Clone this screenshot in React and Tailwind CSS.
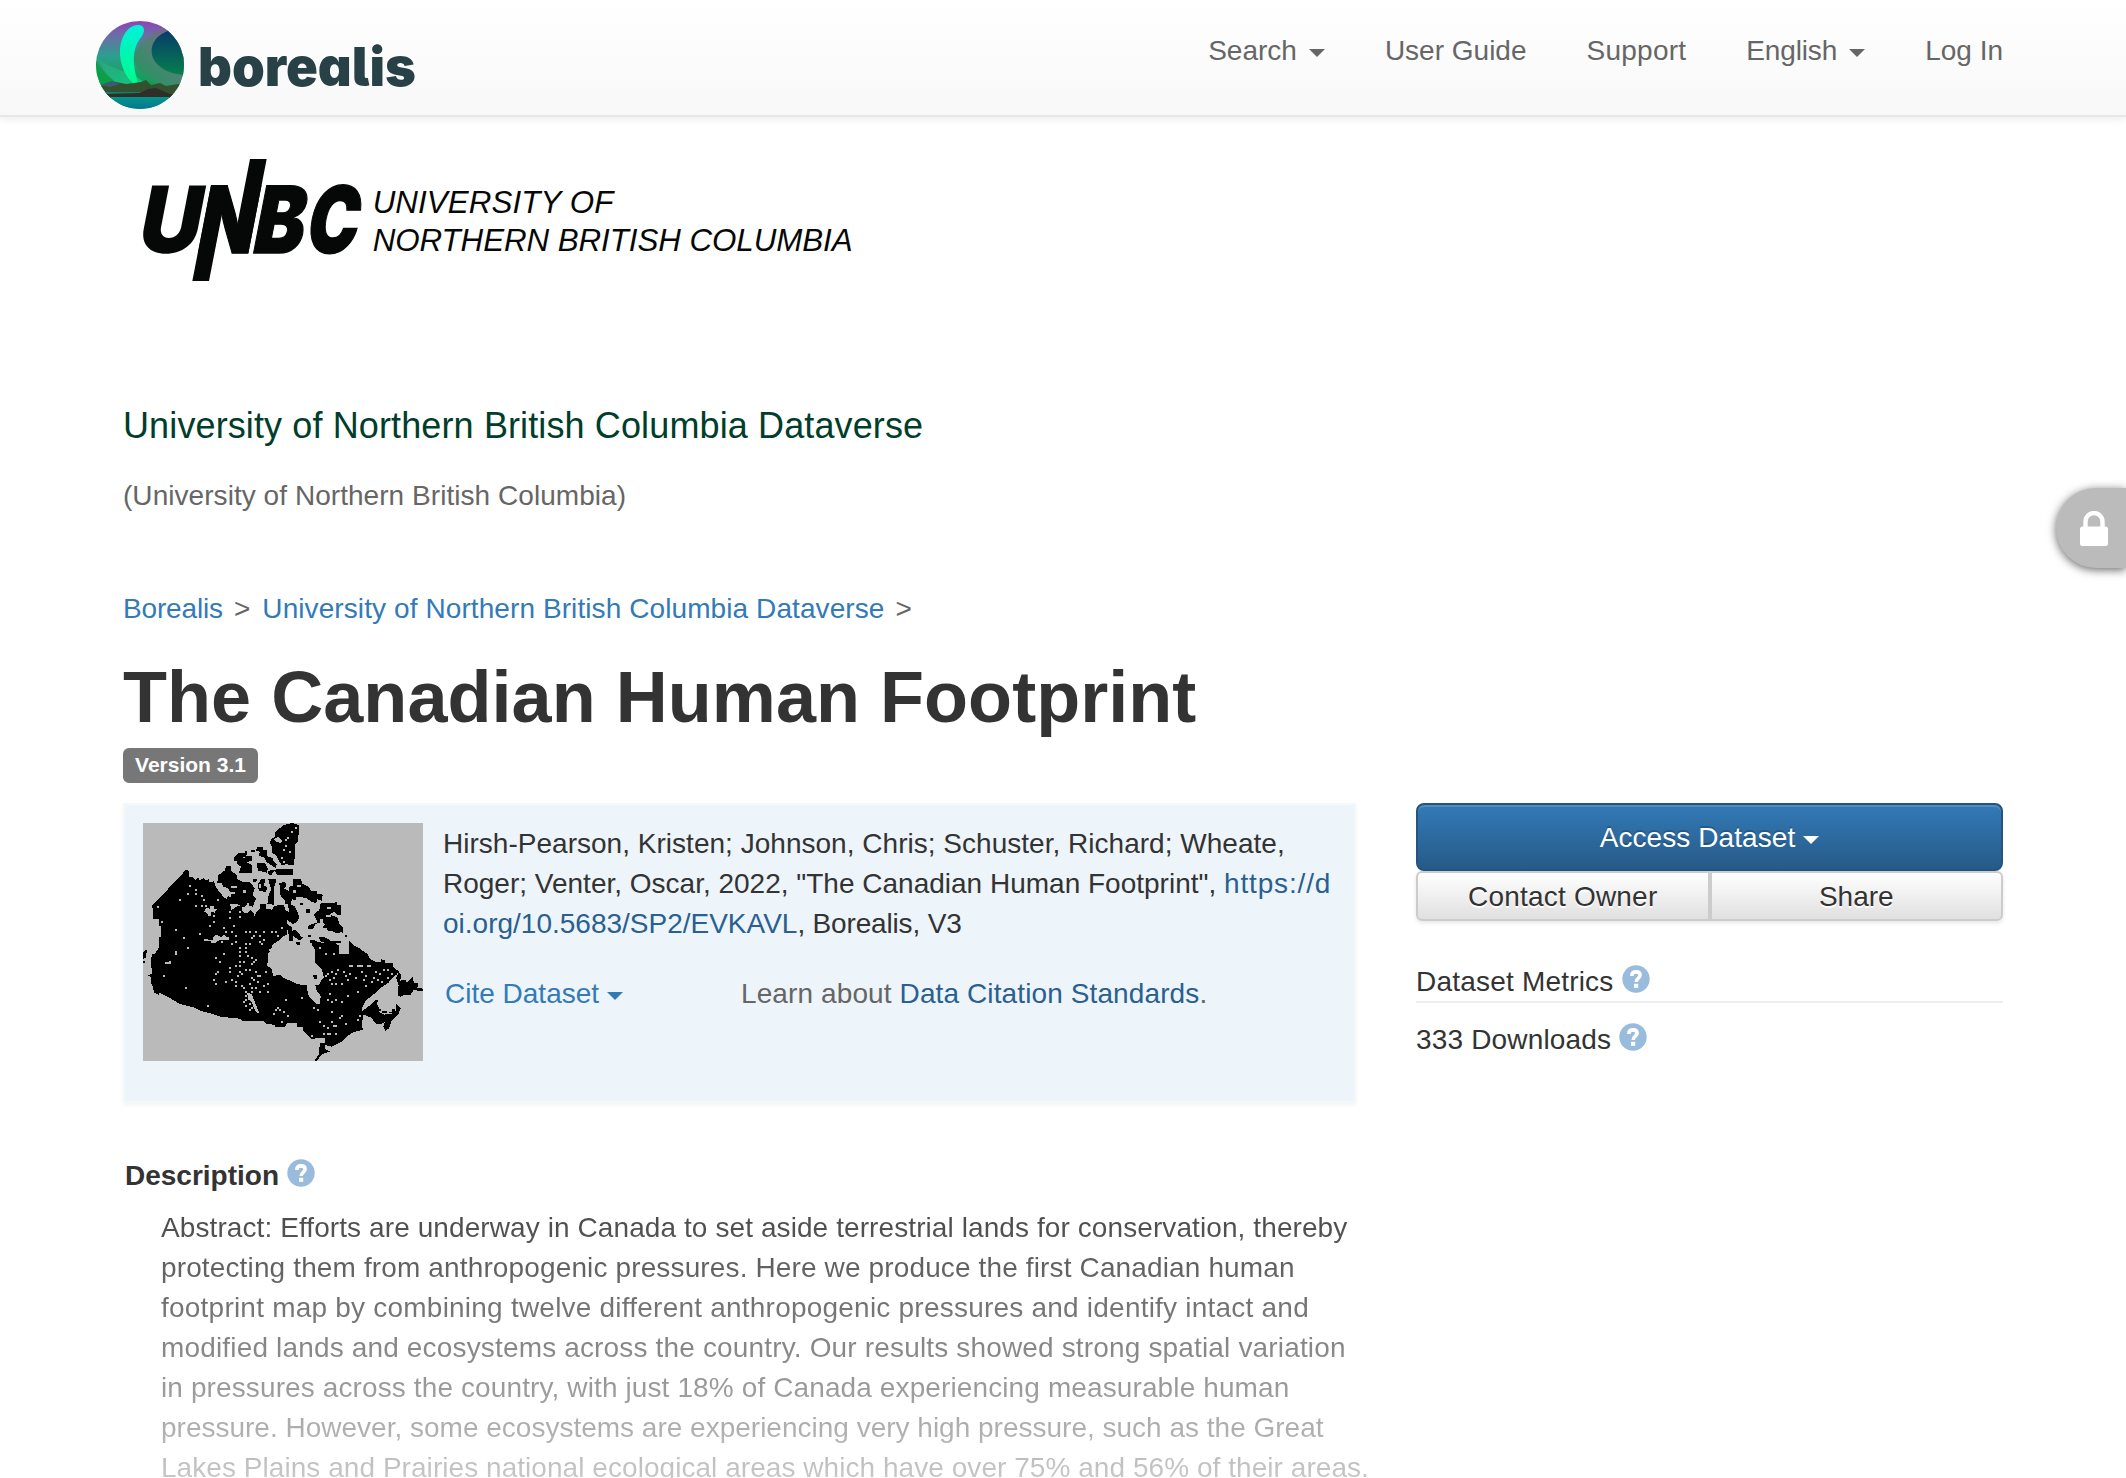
import React from "react";

const holes =
  "180,258 198,270 174,282 150,300 198,282 216,288 222,300 198,318 216,318 228,318 264,300 84,322 96,366 138,390 162,414 210,402 174,444 138,456 138,462 120,486 108,490 102,528 168,564 234,618 240,378 252,366 252,348 300,336 330,336 300,354 330,352 312,378 282,384 288,396 306,396 318,408 276,426 294,414 306,432 318,426 348,396 360,396 372,408 378,396 390,408 402,396 426,396 438,396 456,384 330,444 348,432 348,444 360,432 366,414 390,426 396,432 330,456 348,456 354,468 366,474 330,468 330,486 342,486 372,486 378,480 366,492 330,498 300,504 318,498 330,516 336,522 324,528 348,510 360,510 366,534 378,516 384,528 372,540 300,516 306,540 318,546 318,558 336,558 288,546 252,540 264,516 258,522 258,552 282,462 258,474 270,486 342,564 348,576 354,582 348,588 366,576 378,564 384,546 390,576 402,558 414,552 414,576 360,552 366,564 348,600 342,606 348,618 360,612 366,624 360,630 384,636 390,528 408,516 468,600 516,594 444,624 438,630 450,630 432,642 462,636 474,648 456,666 552,624 564,630 606,636 570,666 582,678 594,684 606,666 612,678 618,678 582,702 594,702 600,702 546,708 618,702 606,606 618,600 636,606 654,588 600,582 594,600 684,576 636,552 618,552 606,552 600,540 612,534 594,522 588,528 606,516 624,510 618,522 642,516 648,528 660,522 660,498 666,498 684,498 690,498 696,498 714,498 720,498 654,540 678,534 696,516 708,528 702,540 732,534 744,540 726,546 708,558 738,516 750,522 762,510 774,510 786,522 756,546 774,534 612,462 588,462 570,444 636,648 630,654 684,660 690,648 648,672 498,84 486,96 468,120 474,114 468,138 462,150 480,156 456,174 462,186 420,450 402,420 444,408";

const mainland =
  "168,208 178,214 178,232 188,232 198,242 200,234 206,234 206,242 222,234 226,240 238,238 238,246 252,244 258,262 270,278 282,292 292,298 300,310 304,330 322,318 336,318 338,336 350,340 362,330 372,340 372,350 384,330 396,322 408,322 412,338 426,330 432,318 452,318 452,340 468,330 472,350 470,366 474,384 470,404 458,410 448,420 436,428 426,436 424,446 414,462 412,498 424,504 430,528 448,524 468,538 486,544 500,552 530,556 534,584 548,602 560,614 570,612 572,588 560,572 556,556 566,556 572,544 582,532 576,510 556,490 556,450 548,438 544,426 560,424 580,430 594,424 616,430 626,436 628,462 656,462 658,424 672,436 690,446 700,454 712,462 720,476 736,486 752,486 752,478 764,480 766,490 788,490 790,502 806,514 798,528 788,536 780,554 762,568 748,570 724,588 708,602 698,618 696,636 706,626 720,616 736,600 746,600 740,612 746,622 748,636 762,644 790,640 798,630 798,612 812,626 804,644 792,654 784,664 778,684 766,692 760,680 764,666 752,672 740,672 722,652 700,644 696,670 698,690 672,696 652,708 636,724 604,740 584,734 584,746 600,754 574,764 562,782 554,782 566,764 570,730 584,730 584,714 544,716 520,694 518,680 502,680 500,668 474,668 464,680 436,680 432,674 408,672 398,662 336,662 330,656 270,650 240,640 210,632 190,622 150,612 120,594 88,578 86,584 72,578 68,560 62,548 62,532 54,526 66,520 64,498 62,486 66,464 76,460 86,444 86,412 92,410 92,378 86,376 88,356 70,356 70,326 64,318 96,288 120,260 150,230";

function CanadaMap() {
  const pts = holes.split(" ").map((p) => p.split(",").map(Number));
  return (
    <svg className="block h-[238px] w-[280px] shrink-0" viewBox="39 69 840 714" shapeRendering="crispEdges">
      <rect x="39" y="69" width="840" height="714" fill="#bababa" />
      <g fill="#000">
        <polygon points={mainland} />
        <path d="M806 514l8 12-4 16 18-2 2 8 18-16 4 16 12 2-2 14 17 2 0 8-17-2-10-4-10 16-16 0-14 6-10-4 4-30-8-20z" />
        <path d="M39 456l12-8-4 26-8 2zM39 482h6v8h-6z" />
        <path d="M486 69l22 6-4 50-10 8 2 32-6 32-20-4-16 2-14-26-14-12 0-18-8-10 6-12 12-8 0-14 26-20z" />
        <path d="M444 206h44v18h-46l-10-12-8 14-12-4 4-10 24-4zM426 178l14 16-4 10-20-14z" />
        <path d="M384 140h14v10h12v18l18 6v14h-18l-8-16-16-4 4-12-14-6zM362 150h14v6h-14zM310 174l14-14h20v-6h8v10l-14 10h20v-6h8v14l-16 4 16 10v24h-40l8-22-10-2-4-12h-6zM346 168h20v14h-20zM380 188h24l10 18-4 12-26-6z" />
        <path d="M264 226l20-14 4-14h14v14l18 12v12l18 10 22 0 14 18-6 20 10 12-10 24-18-4-10 6-20-10-26-2-4-18 10-8-2-14-12-10-6 2-4-12-14-2zM368 236h12l0 8-12 2zM384 252l10-16h12l0 10-6 10 12 6-4 14-22-4zM414 236h26l-8 28 0 50-20-2 4-28 8-14zM390 312h18v14l14 2v10l-30 6z" />
        <path d="M448 250l18-6 2 14-6 8 14 6v-12l14-2v-20h22l6 14 16 8 10 12 16 0 0 8 18 4-2 18-14-4-4 12-16-6-10-8-16-4-18-2 0 12-12-4-4 14h-18v-10l-12-14z" />
        <path d="M442 316l20 0 4 14 12 6-6-26 22 8 6 12 8 22-8 14-12 6-14-10-10-14-14-8zM572 310h42v-4h6v10h12v30h-10l-10-10-14 8 24 8 6 20 12 10-4 14-16 4-14-8-12 2-4-10-14-2 10-8-10-8-20 6-8 16h-14v-10l14-6 14-4-4-12-8-12 18-14z" />
        <path d="M472 372l14 10 0 12 10-6 18 22 6 2-10 10-12-8-8-6v14h-12zM498 426l14 2-2 8-10-2zM534 404h10v6h-10zM566 410h16l30 18-4 8-36-12zM630 392l10-4v12zM644 404h8v6h-8zM510 308h8v6h-8zM528 328h12v12h-12zM540 420h14v10h-14zM606 424h26v6h-26z" />
      </g>
      <g fill="#bababa">
        <path d="M222 416h12v4h16v-10l10-6 14 8 8-10 6 8 10 0v10h-30l-14 10h-12v-6h-18zM222 334l8-10 10 2v-8h12v8l8 2-6 10-10-2v12h-8l-6-10-8-2zM106 486h18v6h-18zM730 586l8-6 8 10-6 8zM356 578l10 6 14 36 6 18-10-4-12-30-10-6zM432 118l12-8 14 12-6 8-14-6zM388 252h6v12h-6z" />
        <path d="M798 522l6 60-2 26-10 22-14 6-22-8-10-16 2-20-12-12 16-16 24-16 10-14z" />
        <path d="M304 258h16v6h-16zM296 276h20v6h-12v8h-8zM352 220l10 12-14 4zM338 270h10v8h-10zM590 322h12v6h-12zM588 344h14v8h-14zM570 356h10v10h-10zM488 270h10v8h-10zM500 256h12v6h-12zM376 310h10v12h-10zM350 310h8v16h-8z" />
        {pts.map(([x, y], i) => (
          <rect key={i} x={x - 3} y={y - 3} width="6" height="6" />
        ))}
      </g>
      <path fill="#000" d="M548 524h12v12h-8v-6h-4zM756 634h14v6h-14zM778 636h8v-10h8v12h-16zM746 626h6v8h-6z" />
    </svg>
  );
}

function BorealisMark() {
  return (
    <svg className="block h-[100px] w-[340px]" viewBox="80 15 340 100">
      <defs>
        <clipPath id="disc"><circle cx="140" cy="65" r="44" /></clipPath>
        <linearGradient id="sky" x1="0" y1="0" x2="0" y2="1">
          <stop offset="0" stopColor="#9040b8" />
          <stop offset=".14" stopColor="#7268a8" />
          <stop offset=".4" stopColor="#2b9f8e" />
          <stop offset=".75" stopColor="#0d9f48" />
        </linearGradient>
        <linearGradient id="mauve" x1=".9" y1="0" x2=".2" y2="1">
          <stop offset="0" stopColor="#94509c" />
          <stop offset=".4" stopColor="#5a7d7a" />
          <stop offset="1" stopColor="#1b9a5c" />
        </linearGradient>
        <linearGradient id="night" x1="0" y1="0" x2="0" y2="1">
          <stop offset="0" stopColor="#063a6b" />
          <stop offset="1" stopColor="#06804c" />
        </linearGradient>
        <linearGradient id="beam" x1="0" y1="0" x2="0" y2="1">
          <stop offset="0" stopColor="#00f2dc" />
          <stop offset="1" stopColor="#00fa86" />
        </linearGradient>
        <linearGradient id="swoosh" x1="0" y1="0" x2="1" y2="1">
          <stop offset="0" stopColor="#2fa07e" />
          <stop offset="1" stopColor="#00e080" />
        </linearGradient>
        <linearGradient id="lake" x1="0" y1="0" x2="0" y2="1">
          <stop offset="0" stopColor="#04968a" />
          <stop offset="1" stopColor="#066f96" />
        </linearGradient>
      </defs>
      <g clipPath="url(#disc)">
        <rect x="96" y="21" width="88" height="88" fill="url(#sky)" />
        <path d="M163 28C148 36 134 46 134 58C134 74 158 88 186 90V28Z" fill="url(#mauve)" />
        <path d="M170 30C153 36 149 48 153 58C158 69 172 75 186 75V30Z" fill="url(#night)" />
        <path d="M98 58C104 78 126 92 152 98H180C164 92 146 86 136 76C128 72 108 68 98 58Z" fill="url(#swoosh)" />
        <path d="M96 60C104 78 122 88 142 97H96Z" fill="#0b9f48" />
        <path d="M137 25C144 24 146 30 142 36C134 46 130 58 139 86C128 83 119 66 120 49C121 36 128 26 137 25Z" fill="url(#beam)" />
        <path d="M96 88L106 84L116 82L126 84L134 83L141 82L146 80L151 85L160 83L166 86L178 84L186 85V98H96Z" fill="#33512f" />
        <path d="M100 85L112 81L120 84L110 87Z" fill="#3c5a70" />
        <path d="M96 92L140 92V94L96 95Z" fill="#12806a" />
        <path d="M104 94L140 93L148 89L156 88L163 91L170 94H186V98H96Z" fill="#2f2e2a" />
        <rect x="96" y="97" width="88" height="14" fill="url(#lake)" />
      </g>
      <text x="198" y="86" fontSize="54" fontWeight="900" fill="#284147" textLength="218" lengthAdjust="spacingAndGlyphs" fontFamily="Inter, sans-serif" style={{ fontFeatureSettings: '"cv11" 1, "ss01" 1, "ss03" 1, "salt" 1' }}>borealis</text>
    </svg>
  );
}

function UnbcLogo() {
  return (
    <svg className="block h-[160px] w-[760px]" viewBox="0 0 2280 480">
      <g fill="#050807" stroke="#050807" strokeWidth="4" fontFamily="Inter, sans-serif" fontWeight="900" fontSize="278">
        <text transform="translate(15 340) skewX(-11) scale(.93 1)" strokeWidth="0">U</text>
        <text transform="translate(195 340) skewX(-11) scale(.79 1)">N</text>
        <text transform="translate(360 340) skewX(-11) scale(.82 1)">B</text>
        <text transform="translate(520 340) skewX(-11) scale(.74 1)">C</text>
      </g>
      <path fill="#050807" d="M243 135H293L237 423H187ZM360 57H410L355 340H305Z" />
      <g fill="#050807" fontFamily="Liberation Sans, Arial, sans-serif" fontStyle="italic" fontSize="94">
        <text x="728" y="220" textLength="722" lengthAdjust="spacing">UNIVERSITY OF</text>
        <text x="728" y="333" textLength="1440" lengthAdjust="spacing">NORTHERN BRITISH COLUMBIA</text>
      </g>
    </svg>
  );
}

function Caret({ className = "" }) {
  return <span className={"inline-block border-x-8 border-t-8 border-x-transparent border-t-current align-middle " + className} />;
}

function Help({ className = "" }) {
  return (
    <svg className={"block h-7 w-7 shrink-0 " + className} viewBox="0 0 28 28">
      <circle cx="14" cy="14" r="13.7" fill="#9abcdc" />
      <path d="M9.8 11C9.8 7.8 11.6 6.9 14 6.9C16.6 6.9 18.1 8.3 18.1 10.3C18.1 13.2 14.2 13 14.2 17" fill="none" stroke="#fff" strokeWidth="3.6" />
      <rect x="12" y="18.8" width="4.2" height="4" fill="#fff" />
    </svg>
  );
}

const lines = [
  ["Abstract: Efforts are underway in Canada to set aside terrestrial lands for conservation, thereby", "tracking-[0.09px]"],
  ["protecting them from anthropogenic pressures. Here we produce the first Canadian human", "tracking-[0.134px]"],
  ["footprint map by combining twelve different anthropogenic pressures and identify intact and", "tracking-[0.22px]"],
  ["modified lands and ecosystems across the country. Our results showed strong spatial variation", "tracking-[0.16px]"],
  ["in pressures across the country, with just 18% of Canada experiencing measurable human", "tracking-[0.115px]"],
  ["pressure. However, some ecosystems are experiencing very high pressure, such as the Great", "tracking-normal"],
  ["Lakes Plains and Prairies national ecological areas which have over 75% and 56% of their areas.", "tracking-[0.05px]"],
];

export default function App() {
  return (
    <div className="h-[1478px] w-[2126px] overflow-hidden bg-white font-['Liberation_Sans',Arial,sans-serif] text-[28px] leading-10 whitespace-nowrap text-[#333]">
      <header className="flex h-[117px] justify-between border-b-2 border-[#e7e7e7] bg-gradient-to-b from-white to-[#f8f8f8] pt-[15px] pr-[123px] pl-20 shadow-[0_2px_8px_rgba(0,0,0,0.08)]">
        <BorealisMark />
        <nav className="flex pt-4 text-[#666]">
          <span>Search</span><Caret className="mt-[18px] ml-3" />
          <span className="ml-[60px]">User Guide</span>
          <span className="ml-[60px] tracking-[0.25px]">Support</span>
          <span className="ml-[60px] tracking-[-0.15px]">English</span><Caret className="mt-[18px] ml-3" />
          <span className="ml-[60px]">Log In</span>
        </nav>
      </header>
      <div className="pt-[23px] pl-[130px]"><UnbcLogo /></div>
      <main className="px-[123px]">
        <div className="pt-[101px] text-[36px] leading-[50px] tracking-[0.12px] text-[#003d2b]">University of Northern British Columbia Dataverse</div>
        <div className="mt-[25px] tracking-[0.05px] text-[#666]">(University of Northern British Columbia)</div>
        <div className="mt-[73px] flex text-[#337ab7]">
          <span className="tracking-[-0.15px]">Borealis</span><span className="ml-[11px] text-[#666]">&gt;</span>
          <span className="ml-3 tracking-[0.09px]">University of Northern British Columbia Dataverse</span><span className="ml-[11px] text-[#666]">&gt;</span>
        </div>
        <h1 className="mt-7 text-[72px] leading-[80px] font-bold tracking-[0.05px]">The Canadian Human Footprint</h1>
        <div className="mt-[11px] flex h-[35px] w-[135px] items-center justify-center rounded-md bg-[#777] pb-0.5 text-[21px] font-bold text-white">Version 3.1</div>
        <div className="mt-5 flex gap-[60px]">
          <section className="flex h-[300px] w-[1233px] shrink-0 border-2 border-[#f3f8fb] bg-[#edf5fb] p-[18px] shadow-[0_2px_4px_rgba(0,0,0,0.05)]">
            <CanadaMap />
            <div className="ml-5 pt-px">
              <div className="tracking-[0.02px]">Hirsh-Pearson, Kristen; Johnson, Chris; Schuster, Richard; Wheate,</div>
              <div>Roger; Venter, Oscar, 2022, "The Canadian Human Footprint", <span className="tracking-[0.85px] text-[#2a5f90]">https://d</span></div>
              <div><span className="text-[#2a5f90]">oi.org/10.5683/SP2/EVKAVL</span><span className="tracking-[-0.17px]">, Borealis, V3</span></div>
              <div className="mt-[30px] flex">
                <div className="flex w-[298px] pl-0.5 text-[#337ab7]"><span>Cite Dataset</span><Caret className="mt-[18px] ml-2" /></div>
                <div className="tracking-[0.11px] text-[#666]">Learn about <span className="text-[#2a5f90]">Data Citation Standards</span>.</div>
              </div>
            </div>
          </section>
          <aside className="w-[587px]">
            <div className="flex h-[68px] justify-center rounded-lg border-2 border-[#245580] bg-gradient-to-b from-[#337ab7] to-[#265a88] pt-[13px] text-white shadow-[inset_0_2px_0_rgba(255,255,255,0.15)] [text-shadow:0_-2px_0_rgba(0,0,0,0.2)]">
              <span className="tracking-[0.08px]">Access Dataset</span><Caret className="mt-[18px] ml-2" />
            </div>
            <div className="flex h-[50px] rounded-md text-center leading-[48px] shadow-[0_2px_4px_rgba(0,0,0,0.1)] [text-shadow:0_2px_0_#fff]">
              <div className="flex-1 rounded-l-md border-2 border-[#ccc] bg-gradient-to-b from-white to-[#e0e0e0] tracking-[0.2px]">Contact Owner</div>
              <div className="flex-1 rounded-r-md border-2 border-[#ccc] bg-gradient-to-b from-white to-[#e0e0e0]">Share</div>
            </div>
            <div className="mt-[41px] flex h-[41px] border-b-2 border-[#eee]"><span className="tracking-[0.2px]">Dataset Metrics</span><Help className="mt-[3px] ml-2" /></div>
            <div className="mt-[17px] flex"><span className="tracking-[0.17px]">333 Downloads</span><Help className="mt-[3px] ml-2" /></div>
          </aside>
        </div>
        <div className="mt-[53px] flex pl-[2px] font-bold"><span>Description</span><Help className="mt-[3px] ml-2" /></div>
        <div className="mt-3 pl-[38px]">
          <div className="bg-gradient-to-b from-[#474747] to-[#cdcdcd] bg-clip-text text-transparent">
            {lines.map(([text, tracking]) => <div key={text} className={tracking}>{text}</div>)}
          </div>
        </div>
      </main>
      <div className="absolute top-[488px] right-0 h-20 w-[70px] rounded-l-[40px] bg-[#bbb] shadow-[0_2px_10px_rgba(0,0,0,0.6)]">
        <svg className="mt-[23px] ml-6 h-[35px] w-7" viewBox="0 0 28 35">
          <path d="M5.5 17V10.5a8.5 8.5 0 0 1 17 0V17" fill="none" stroke="#fff" strokeWidth="4.4" />
          <rect y="15.5" width="28" height="19.5" rx="2.5" fill="#fff" />
        </svg>
      </div>
    </div>
  );
}
